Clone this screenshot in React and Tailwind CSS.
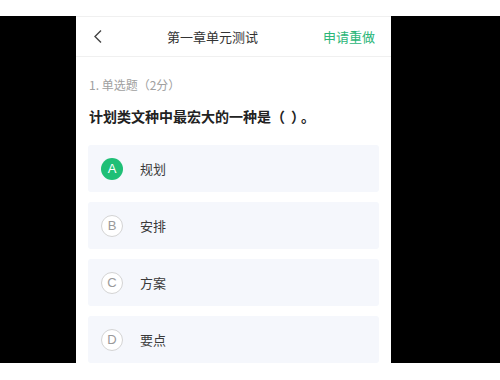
import React from 'react';

const font = { fontFamily: '"Noto Sans CJK SC", "Noto Sans", sans-serif' };

const options = [
  { key: 'A', text: '规划', selected: true },
  { key: 'B', text: '安排' },
  { key: 'C', text: '方案' },
  { key: 'D', text: '要点' },
];

const Option = ({ opt }) => (
  <div className="flex items-center h-[47px] rounded-[3px] bg-[#f5f7fc] pl-[13px]">
    <div
      className={
        opt.selected
          ? 'w-[22px] h-[22px] rounded-full bg-[#1fbf76] text-white flex items-center justify-center text-[13px] font-["Liberation_Sans",sans-serif]'
          : 'w-[22px] h-[22px] rounded-full bg-white border border-[#d4d4d4] text-[#9a9a9a] flex items-center justify-center text-[13px] font-["Liberation_Sans",sans-serif]'
      }
    >
      {opt.key}
    </div>
    <span className="ml-[17px] text-[13px] text-[#3a3a3a]">{opt.text}</span>
  </div>
);

export default function App() {
  return (
    <div className="w-[500px] h-[380px] bg-white flex flex-col overflow-hidden" style={font}>
      <div className="h-[16px] shrink-0" />
      <div className="flex h-[347px] shrink-0">
        <div className="w-[76px] bg-black" />
        <div className="w-[315px] bg-white flex flex-col">
          {/* header */}
          <div className="h-[41px] shrink-0 border-t border-b border-[#f0f0f0] flex items-center px-4">
            <svg width="8" height="13" viewBox="0 0 8 13" className="ml-[2px]">
              <polyline points="7,0.5 1,6.5 7,12.5" fill="none" stroke="#444" strokeWidth="1.4" />
            </svg>
            <span className="ml-[65px] text-[13px] text-[#333]">第一章单元测试</span>
            <span className="ml-auto text-[13px] text-[#2bb678]">申请重做</span>
          </div>
          {/* body */}
          <div className="px-3 flex flex-col">
            <div className="mt-[19px] pl-[1px] text-[12px] leading-[17px] text-[#a0a0a0]">1. 单选题（2分）</div>
            <div className="mt-[13px] pl-[1px] text-[14px] leading-[20px] font-bold text-[#222]">
              计划类文种中最宏大的一种是（<span className="inline-block w-[6px]" />）<span className="ml-[3px]">。</span>
            </div>
            <div className="mt-[19px] flex flex-col gap-[10px]">
              {options.map((o) => (
                <Option key={o.key} opt={o} />
              ))}
            </div>
          </div>
        </div>
        <div className="flex-1 bg-black" />
      </div>
      <div className="flex-1" />
    </div>
  );
}
